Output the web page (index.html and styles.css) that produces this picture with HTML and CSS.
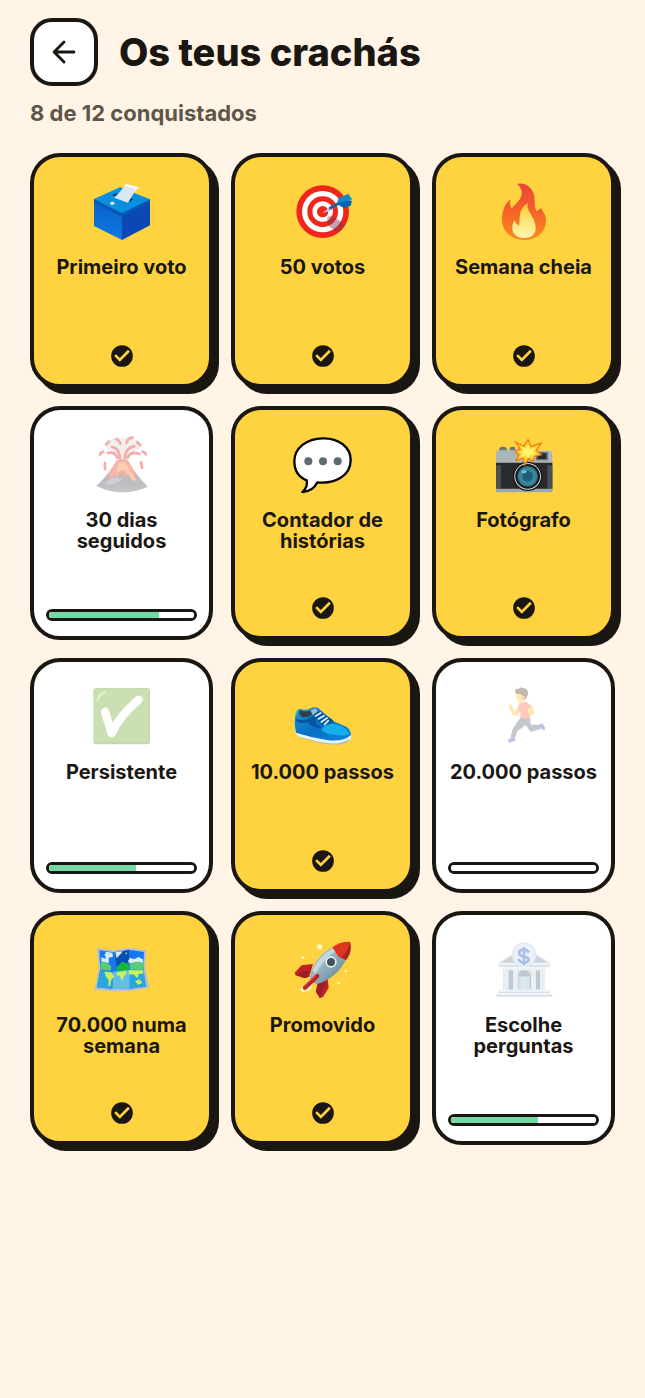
FILE: index.html
```
<!DOCTYPE html>
<html lang="pt">
<head>
<meta charset="utf-8">
<meta name="viewport" content="width=device-width, initial-scale=1">
<title>Os teus crachás</title>
<link rel="stylesheet" href="styles.css">
</head>
<body>
<svg class="defs" aria-hidden="true">
  <defs>
    <symbol id="check" viewBox="0 0 24 24">
      <path fill="currentColor" fill-rule="evenodd" d="M12 2a10 10 0 1 0 0 20 10 10 0 0 0 0-20zm-2 15.200-5.200-5.200 1.700-1.700 3.500 3.500 7.500-7.500 1.700 1.700z"/>
    </symbol>
    <linearGradient id="flame" x1="0" y1="0" x2="0" y2="1"><stop offset="0" stop-color="#e8453a"/><stop offset=".45" stop-color="#f5602a"/><stop offset="1" stop-color="#fb8c1f"/></linearGradient>
    <linearGradient id="flame-core" x1="0" y1="0" x2="0" y2="1"><stop offset="0" stop-color="#ffc928"/><stop offset=".5" stop-color="#ffe577"/><stop offset="1" stop-color="#fff6b0"/></linearGradient>
    <linearGradient id="box-left" x1="0" y1="0" x2="0" y2="1"><stop offset="0" stop-color="#0b5fca"/><stop offset="1" stop-color="#0a7ae0"/></linearGradient>
    <linearGradient id="cone" x1="0" y1="0" x2="0" y2="1"><stop offset="0" stop-color="#e53528"/><stop offset=".35" stop-color="#b5443a"/><stop offset=".6" stop-color="#54585e"/><stop offset="1" stop-color="#6a6f76"/></linearGradient>
    <linearGradient id="hull" x1="0" y1="0" x2="1" y2="1"><stop offset="0" stop-color="#c5d8e0"/><stop offset=".5" stop-color="#8fadba"/><stop offset="1" stop-color="#557787"/></linearGradient>
    <linearGradient id="shoe" x1="0" y1="0" x2="1" y2="1"><stop offset="0" stop-color="#1597df"/><stop offset=".5" stop-color="#0870c4"/><stop offset="1" stop-color="#0a84d8"/></linearGradient>
  </defs>
</svg>
<main class="page">
  <header class="header">
    <button class="back" type="button" aria-label="Voltar">
      <svg viewBox="0 0 24 24" aria-hidden="true"><path d="M19 12H5M12 5l-7 7 7 7"/></svg>
    </button>
    <h1 class="title">Os teus crachás</h1>
  </header>
  <p class="summary">8 de 12 conquistados</p>

  <ul class="badges">
    <li class="badge earned">
      <svg class="emoji" viewBox="215 111 180 180" aria-hidden="true">
        <path fill="#0a8ee0" d="M221 162 299 127 389 163 305 207z"/>
        <path fill="url(#box-left)" d="M221 162 305 207V285L221 243z"/>
        <path fill="#0b47b5" d="M305 207 389 163V241L305 285z"/>
        <path fill="#0757b5" d="M221 162 305 205 389 163V172L305 216 221 172z"/>
        <path fill="#063c83" d="M276 151 326 171 339 163 285 145z"/>
        <path fill="#dce7f4" d="M281 158Q297 146 317 117L356 127Q344 137 323 173z"/>
        <path fill="#f4f8fd" d="M317 117 356 127 349 135 312 123z"/>
        <ellipse cx="276" cy="175" rx="7" ry="5" fill="#e4f2fb"/>
      </svg>
      <h2 class="name">Primeiro voto</h2>
      <svg class="check" role="img" aria-label="Conquistado"><use href="#check"/></svg>
    </li>
    <li class="badge earned">
      <svg class="emoji" viewBox="38 36 180 180" aria-hidden="true">
        <circle cx="127" cy="125" r="79" fill="#f0251c"/>
        <circle cx="127" cy="125" r="62" fill="#fff"/>
        <circle cx="127" cy="125" r="46" fill="#f0251c"/>
        <circle cx="127" cy="125" r="31" fill="#fff"/>
        <circle cx="127" cy="125" r="17" fill="#f0251c"/>
        <path fill="#7b3550" opacity=".45" d="M140 143 152 136 196 164 174 188 146 169z"/>
        <path fill="#b9c7d6" d="M126 130 151 108 158 119z"/>
        <path stroke="#1660a8" stroke-width="8" d="M147 116 182 96"/>
        <path fill="#1386cf" d="M169 102 175 84 205 71 209 81 216 86 190 106z"/>
        <path fill="#0866ae" d="M169 102 190 94 215 92 211 107 191 114z"/>
      </svg>
      <h2 class="name">50 votos</h2>
      <svg class="check" role="img" aria-label="Conquistado"><use href="#check"/></svg>
    </li>
    <li class="badge earned">
      <svg class="emoji" viewBox="41 36 180 180" aria-hidden="true">
        <path fill="url(#flame)" d="M111 42C133 36 164 53 163 92Q162 109 168 123C174 124 174 116 184 115C184 126 198 130 197 153C195 191 166 210 131 210C92 210 65 184 65 148C65 124 74 97 91 89C87 101 90 108 94 116C108 99 126 88 124 66Q122 51 111 42z"/>
        <path fill="url(#flame-core)" d="M143 99C134 120 165 140 166 171C167 193 153 204 132 204C109 204 96 191 96 173Q96 160 102 151C106 159 110 164 116 167C121 148 111 117 143 99z"/>
      </svg>
      <h2 class="name">Semana cheia</h2>
      <svg class="check" role="img" aria-label="Conquistado"><use href="#check"/></svg>
    </li>

    <li class="badge">
      <svg class="emoji" viewBox="215 104 180 180" aria-hidden="true">
        <path fill="#ded8d7" d="M257 134Q251 116 274 118 288 105 305 113 329 106 344 119 364 118 360 134 365 147 343 152L319 178H296L276 151Q253 150 257 134z"/>
        <path fill="url(#cone)" d="M290 179Q305 174 322 179Q345 222 382 259Q305 294 228 257Q264 224 290 179z"/>
        <path fill="#ee4a2d" d="M288 182H324L338 207 347 238 336 242 325 216 318 229 305 210 289 230 280 222 274 237 266 233 273 207z"/>
        <path fill="#ff9a3c" d="M296 186H315L327 208 347 240 338 242 312 207 288 218z" opacity=".75"/>
        <path fill="none" stroke="#e8302a" stroke-width="8" stroke-linecap="round" d="M299 174Q295 140 275 140M313 174Q317 140 342 138M291 172Q283 153 262 158M322 172Q331 151 357 161M300 130Q297 120 288 117M318 128Q321 114 337 112M257 133 266 124M350 126 360 134M239 163Q241 155 249 154M366 154Q374 155 376 162M254 188V206M362 186 365 203"/>
        <path fill="#9da0a6" d="M251 247 279 231 307 235 288 249 267 253z" opacity=".7"/>
      </svg>
      <h2 class="name" id="b4">30 dias seguidos</h2>
      <progress class="bar" max="100" value="76" aria-labelledby="b4"></progress>
    </li>
    <li class="badge earned">
      <svg class="emoji" viewBox="38 29 180 180" aria-hidden="true">
        <path fill="#fff" stroke="#050505" stroke-width="7" stroke-linejoin="round" d="M127 39C175 38 212 65 211 105C211 151 164 177 111 171C103 188 87 199 66 200C77 190 83 180 79 165C53 155 42 135 42 108C42 68 79 40 127 39z"/>
        <g fill="#5b6b70"><circle cx="84" cy="108" r="12"/><circle cx="128" cy="108" r="12"/><circle cx="172" cy="108" r="12"/></g>
      </svg>
      <h2 class="name">Contador de histórias</h2>
      <svg class="check" role="img" aria-label="Conquistado"><use href="#check"/></svg>
    </li>
    <li class="badge earned">
      <svg class="emoji" viewBox="41 29 180 180" aria-hidden="true">
        <path fill="#68757c" d="M57 77V68Q68 61 79 68V78zM88 77V67Q97 61 105 67V78z"/>
        <path fill="#a9b6bc" d="M47 112V83Q48 76 60 75H108L116 67H160L170 76H207Q216 77 216 86V112z"/>
        <path fill="#292a2d" d="M47 112H216V192H47z"/>
        <path fill="#4b4e52" d="M47 120H62V190H47zM201 120H216V190H201z"/>
        <path fill="#9ba7ac" d="M47 190H216V201H47z"/>
        <path fill="#67747a" d="M167 80H203V105H167z"/><path fill="#252a2e" d="M172 84H198V101H172z"/>
        <circle cx="142" cy="153" r="44" fill="#17191c"/><circle cx="142" cy="153" r="40" fill="#d1d7d9"/>
        <circle cx="142" cy="153" r="37" fill="#17191c"/>
        <circle cx="142" cy="153" r="31" fill="#31707e"/><circle cx="142" cy="153" r="27" fill="#3686a0"/>
        <circle cx="142" cy="153" r="16" fill="#225d78"/><ellipse cx="131" cy="139" rx="8" ry="5" fill="#80bac9"/>
        <path fill="#ffd734" stroke="#f27c13" stroke-width="4" d="M106 50 130 63 143 43 152 64 182 53 168 76 183 88 163 93 158 108 145 99 133 118 129 98 107 105 116 88 103 78 120 72z"/>
        <path fill="#fff06f" d="M122 61 136 70 144 57 149 72 165 66 158 79 168 85 152 88 145 97 136 90 123 95 127 84 116 79 130 76z"/>
      </svg>
      <h2 class="name">Fotógrafo</h2>
      <svg class="check" role="img" aria-label="Conquistado"><use href="#check"/></svg>
    </li>

    <li class="badge">
      <svg class="emoji" viewBox="50 37 180 180" aria-hidden="true">
        <rect x="54" y="40" width="170" height="169" rx="10" fill="#689f38"/>
        <rect x="56" y="42" width="164" height="160" rx="9" fill="#7cb342"/>
        <path fill="none" stroke="#aed581" stroke-width="8" stroke-linecap="round" d="M67 77Q69 59 88 54"/>
        <path fill="none" stroke="#fff" stroke-width="25" stroke-linecap="round" stroke-linejoin="round" d="M89 111 109 176Q131 126 190 75"/>
      </svg>
      <h2 class="name" id="b7">Persistente</h2>
      <progress class="bar" max="100" value="60" aria-labelledby="b7"></progress>
    </li>
    <li class="badge earned">
      <svg class="emoji" viewBox="38 37 180 180" aria-hidden="true">
        <path fill="#e6f4fa" d="M43 162Q45 183 61 188L142 208Q183 212 207 197 216 191 211 181z"/>
        <path fill="#9dbbc4" d="M52 185Q97 200 139 205 183 211 208 192 205 202 189 207 158 213 122 206L62 190Q55 188 52 185z"/>
        <path fill="url(#shoe)" d="M46 116Q50 101 63 103 78 109 91 101 101 95 113 99L158 140 195 155Q213 165 211 182 190 201 143 197 91 188 47 174 40 145 46 116z"/>
        <path fill="#333e49" d="M57 107Q55 123 67 128 83 129 95 120L90 108Q71 113 57 107z"/>
        <path fill="#a2b8c7" d="M91 107 106 101 112 110 98 122z"/>
        <path fill="#0754a1" d="M48 132Q73 143 99 122 108 137 126 151 143 148 162 142L153 132 117 109 102 118 109 148 128 161Q96 160 81 142 63 149 47 139z"/>
        <path fill="#16aee9" d="M123 166Q128 151 158 147 188 150 207 174 201 186 165 181 139 179 123 166z"/>
        <path fill="none" stroke="#def4ff" stroke-width="5" stroke-linecap="round" d="M106 124 121 115M114 133 131 123M123 142 140 130M133 149 144 138"/>
        <path fill="none" stroke="#71cf71" stroke-width="3" d="M45 126 49 112 56 104"/>
      </svg>
      <h2 class="name">10.000 passos</h2>
      <svg class="check" role="img" aria-label="Conquistado"><use href="#check"/></svg>
    </li>
    <li class="badge">
      <svg class="emoji" viewBox="41 37 180 180" aria-hidden="true">
        <path fill="#6c7781" d="M119 131 149 127 151 150 185 151 188 161 151 172 136 151 111 170 103 194 90 191 97 163z"/>
        <path fill="#5564ca" d="M84 192 103 191 105 199 84 204zM176 151 185 146 195 160 191 168z"/>
        <path fill="#ffc83d" d="M116 96 103 111 93 88 87 90 86 98 96 121 106 124 122 109zM142 93 154 91 162 115 143 131 132 126 148 112z"/>
        <path fill="#ff7f4f" d="M117 84 137 81 152 93 149 101 142 104 148 128Q135 135 119 130L121 110 111 107z"/>
        <path fill="#ffca42" d="M108 56Q106 70 112 78 119 85 130 79L134 61 124 48z"/>
        <path fill="#67503c" d="M106 57Q100 41 115 42 119 36 128 40 145 41 143 59 139 74 130 76L126 62 119 58z"/>
        <circle cx="130" cy="67" r="4" fill="#edb136"/>
      </svg>
      <h2 class="name" id="b9">20.000 passos</h2>
      <progress class="bar" max="100" value="0" aria-labelledby="b9"></progress>
    </li>

    <li class="badge earned">
      <svg class="emoji" viewBox="50 29 180 180" aria-hidden="true">
        <path fill="#b7bfcb" d="M65 53 114 60 160 52 213 60 209 108 222 173 168 181 113 183 57 178 70 119z"/>
        <path fill="#1879ef" d="M72 60 115 66 160 58 206 65 204 108 211 167 163 175 113 176 65 171 75 115z"/>
        <path fill="#2aa6dc" d="M74 121 114 124 159 118 204 121 213 169 163 175 113 176 65 171z"/>
        <path fill="#62bdea" d="M113 124 161 118 163 175 113 176z"/>
        <path fill="#0750af" d="M119 69 160 59 163 96 123 107z"/>
        <path fill="#d9eaf2" d="M91 64 111 67 113 79 100 82 101 98 78 94 78 80 90 86zM120 66 142 63 131 76 124 84zM158 92 164 82 176 87 190 80 202 87 204 97 162 99z"/>
        <path fill="#58cc73" d="M75 98Q92 90 108 108L105 121 75 119zM163 101Q187 89 205 99L204 119 163 118z"/>
        <path fill="#16b83c" d="M124 112 140 94 160 101 160 119 125 123z"/>
        <path fill="#c4f260" d="M87 124 108 126 117 139 107 149 104 168 99 166 100 148 92 140zM125 126 152 121 154 130 146 137 140 153 134 137 123 134zM160 120 205 120 203 130 190 130 187 144 174 132 161 133zM179 153 193 147 201 158 188 163z"/>
        <path fill="#e7faff" d="m91 70 5 7-10-3zM132 68l5-3 2 5zM149 70l4-4 3 4z"/>
      </svg>
      <h2 class="name">70.000 numa semana</h2>
      <svg class="check" role="img" aria-label="Conquistado"><use href="#check"/></svg>
    </li>
    <li class="badge earned">
      <svg class="emoji" viewBox="653 29 180 180" aria-hidden="true">
        <path fill="#fff1b2" d="M674 181 684 163 705 147 713 157 705 180 684 185z"/>
        <path fill="#bd2327" d="M713 101 679 105 658 127 661 135 689 144 702 139zM757 146 760 173 743 200 733 204 721 183 727 158z"/>
        <path fill="#831c27" d="M660 133 683 122 704 122 696 141 686 144zM755 151 742 175 736 203 722 185 730 158z" opacity=".6"/>
        <path fill="url(#hull)" d="M703 144Q713 82 771 50L812 88Q783 145 722 162z"/>
        <path fill="#dce7ea" opacity=".65" d="M712 121Q730 79 773 54L781 62Q740 90 721 132z"/>
        <path fill="#df3420" d="M771 51Q792 33 824 34 831 65 812 89L790 80 771 51z"/>
        <path fill="#a72324" d="M824 34Q832 65 812 89L799 81Q819 60 824 34z"/>
        <circle cx="767" cy="95" r="17" fill="#e3eef1"/><circle cx="767" cy="95" r="12" fill="#42545f"/>
        <path fill="none" stroke="#bd2229" stroke-width="13" stroke-linecap="round" d="M689 172 726 137"/>
        <path fill="none" stroke="#ed5348" stroke-width="3" stroke-linecap="round" d="M687 168 720 137"/>
        <path fill="#fffbd6" d="m733 38 3 7 8 1-6 5 2 8-7-4-7 4 2-8-6-5 8-1z"/>
        <g fill="#fffbd6"><circle cx="682" cy="82" r="4"/><circle cx="811" cy="122" r="4"/><circle cx="790" cy="158" r="4"/><circle cx="712" cy="79" r="2"/></g>
      </svg>
      <h2 class="name">Promovido</h2>
      <svg class="check" role="img" aria-label="Conquistado"><use href="#check"/></svg>
    </li>
    <li class="badge">
      <svg class="emoji" viewBox="206 119 180 180" aria-hidden="true">
        <path fill="#a9bac4" d="M233 207H359V278H233z"/>
        <path fill="#64798a" d="M248 210H263V268H248zM331 210H344V268H331zM275 278V226Q295 187 318 226V278z"/>
        <path fill="#9dc4d0" d="M280 278V228H313V278z"/>
        <path stroke="#e3edf2" stroke-width="2" d="M297 230V278"/>
        <path fill="#cbd9e2" d="M234 207H250V275H234zM263 207H278V275H263zM317 207H332V275H317zM344 207H359V275H344z"/>
        <path fill="#b8c7d1" d="M219 187 296 138 375 187V196H219z"/>
        <path fill="#788d9b" d="M229 186 296 147 364 186z"/>
        <path fill="#d7e3eb" d="M219 188H375V197H219zM230 201H364V210H230z"/>
        <path fill="#a1b5c1" d="M220 195H374V200H220zM219 273H373V279H219zM213 283H381V289H213z"/>
        <path fill="#dce5ef" d="M219 268H373V274H219zM213 279H381V284H213z"/>
        <circle cx="296" cy="163" r="37" fill="#b0c9da"/><circle cx="296" cy="163" r="33" fill="#cedfeb"/>
        <path fill="none" stroke="#355bd0" stroke-width="8" d="M310 157Q306 148 295 148 281 149 281 158 282 166 295 168 310 171 310 179 308 187 295 187 282 186 280 176M296 141V195"/>
      </svg>
      <h2 class="name" id="b12">Escolhe perguntas</h2>
      <progress class="bar" max="100" value="60" aria-labelledby="b12"></progress>
    </li>
  </ul>
</main>
</body>
</html>
```
FILE: styles.css
```
:root {
  --ink: #1a1712;
  --paper: #fff4e6;
  --yellow: #ffd23f;
  --green: #74d8a4;
}

* { box-sizing: border-box; }

body {
  margin: 0;
  min-height: 100vh;
  background: var(--paper);
  color: var(--ink);
  font-family: Inter, "Liberation Sans", sans-serif;
}

.defs {
  position: absolute;
  width: 0;
  height: 0;
}

.page { padding: 18px 30px; }

.header {
  display: flex;
  align-items: center;
  gap: 21px;
}

.back {
  display: flex;
  align-items: center;
  justify-content: center;
  flex: none;
  width: 68px;
  height: 68px;
  padding: 0;
  border: 4px solid var(--ink);
  border-radius: 22px;
  background: #fff;
  color: var(--ink);
}

.back svg {
  width: 34px;
  height: 34px;
  fill: none;
  stroke: currentColor;
  stroke-width: 2;
  stroke-linecap: round;
  stroke-linejoin: round;
}

.title {
  margin: 0;
  font-size: 38px;
  line-height: 48px;
  font-weight: 800;
}

.summary {
  margin: 12px 0 25px;
  color: #5f564a;
  font-size: 22px;
  line-height: 30px;
  font-weight: 700;
}

.badges {
  display: grid;
  grid-template-columns: repeat(3, minmax(0, 1fr));
  gap: 18px;
  margin: 0;
  padding: 0;
  list-style: none;
}

.badge {
  display: flex;
  flex-direction: column;
  align-items: center;
  aspect-ratio: 0.78;
  padding: 25px 12px 15px;
  border: 4px solid var(--ink);
  border-radius: 30px;
  background: #fff;
}

.badge.earned {
  background: var(--yellow);
  box-shadow: 6px 6px 0 var(--ink);
}

.emoji {
  flex: none;
  width: 60px;
  height: 60px;
  opacity: 0.4;
}

.earned .emoji { opacity: 1; }

.name {
  margin: 15px 0 auto;
  font-size: 20px;
  line-height: 21px;
  font-weight: 700;
  text-align: center;
}

.check {
  flex: none;
  width: 26px;
  height: 26px;
}

.bar {
  appearance: none;
  display: block;
  flex: none;
  width: 100%;
  height: 12px;
  overflow: hidden;
  border: 3px solid var(--ink);
  border-radius: 6px;
  background: #fff;
}

.bar::-webkit-progress-bar { background: #fff; }
.bar::-webkit-progress-value { background: var(--green); }
.bar::-moz-progress-bar { background: var(--green); }
```
